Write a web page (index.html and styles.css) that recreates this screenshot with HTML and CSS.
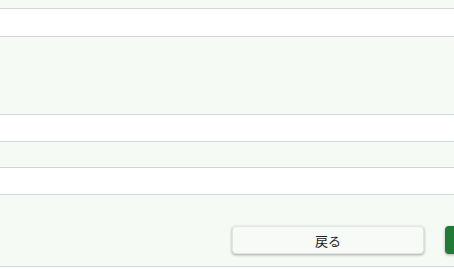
FILE: index.html
```html
<!DOCTYPE html>
<html lang="ja">
<head>
  <meta charset="UTF-8" />
  <meta name="viewport" content="width=device-width, initial-scale=1.0"/>
  <title>確認</title>
  <link rel="stylesheet" href="styles.css">
</head>
<body>
  <div class="table">
    <div class="row alt top"></div>
    <div class="row h27"></div>
    <div class="row alt h77"></div>
    <div class="row h26"></div>
    <div class="row alt h25"></div>
    <div class="row h26"></div>
    <div class="row alt actions">
      <button type="button" class="btn back">戻る</button>
      <button type="button" class="btn primary">送信する</button>
    </div>
  </div>
</body>
</html>
```

FILE: styles.css
```css
body {
  margin: 0;
  font-family: "Noto Sans CJK JP", "Noto Sans", sans-serif;
  background: #fff;
  overflow: hidden;
}

.table {
  width: 100%;
}

.row {
  border-bottom: 1px solid #d0d5d9;
  background: #fff;
}

.row.alt {
  background: #f6faf4;
}

.top { height: 8px; }
.h27 { height: 27px; }
.h77 { height: 77px; }
.h26 { height: 26px; }
.h25 { height: 25px; }

.actions {
  height: 72px;
  display: flex;
  align-items: flex-start;
  padding-left: 232px;
  box-sizing: border-box;
  padding-top: 226px;
  padding-top: 31px;
  gap: 21px;
  white-space: nowrap;
}

.btn {
  flex: none;
  height: 28px;
  border-radius: 4px;
  font-family: inherit;
  font-size: 13px;
  cursor: pointer;
}

.back {
  width: 192px;
  background: #f7faf6;
  color: #222;
  border: 1px solid #e2e6e2;
  box-shadow: 0 1px 3px rgba(0,0,0,0.35);
}

.primary {
  width: 192px;
  background: #237a37;
  color: #fff;
  border: none;
  box-shadow: 0 1px 3px rgba(0,0,0,0.3);
}
```
